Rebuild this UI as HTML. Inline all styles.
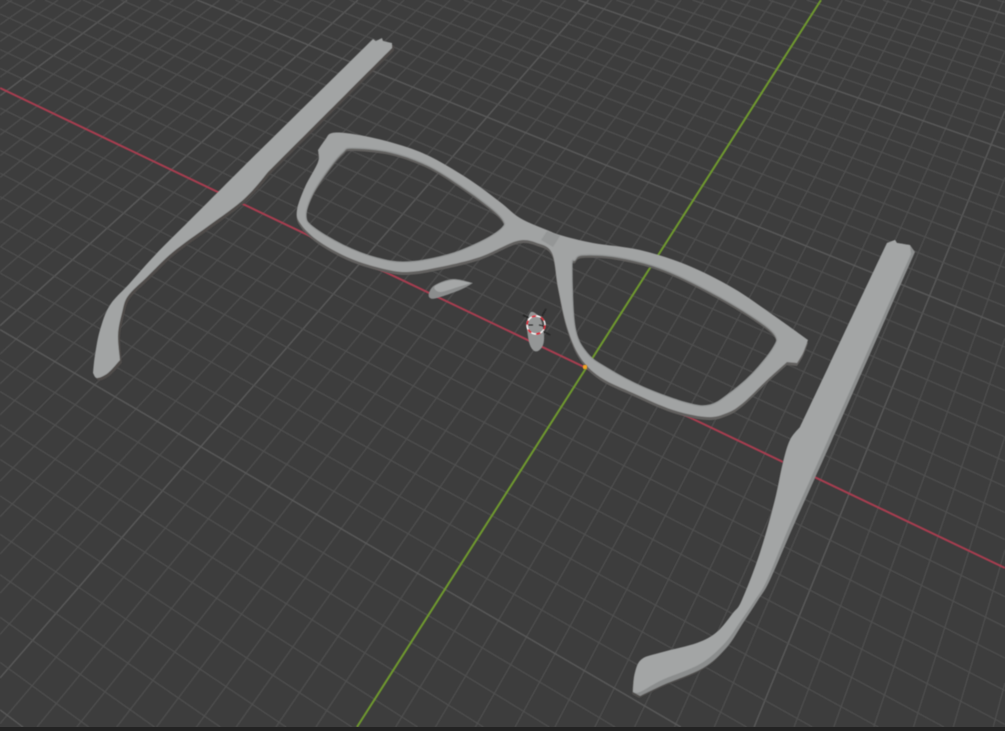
<!DOCTYPE html>
<html><head><meta charset="utf-8"><style>
html,body{margin:0;padding:0;background:#3d3d3d;width:1005px;height:731px;overflow:hidden}
svg{display:block;position:absolute;left:0;top:0;overflow:hidden}
</style></head><body>
<svg width="1005" height="731" viewBox="0 0 1005 731" xmlns="http://www.w3.org/2000/svg">
<defs>
<filter id="b" x="0" y="0" width="100%" height="100%" filterUnits="userSpaceOnUse"><feGaussianBlur stdDeviation="0.45"/></filter>
</defs>
<rect width="1005" height="731" fill="#3d3d3d"/>
<g id="grid" filter="url(#b)"></g>
<g filter="url(#b)">
<line x1="0" y1="88" x2="1005" y2="568" stroke="#a83c4f" stroke-width="2"/>
<line x1="821" y1="0" x2="357" y2="727" stroke="#6f9a2e" stroke-width="2"/>
</g>
<g id="obj" filter="url(#b)" stroke-linejoin="round"></g>
<g filter="url(#b)">
<g fill="none">
<circle cx="536" cy="325" r="9" stroke="#fff" stroke-width="1.4"/>
<circle cx="536" cy="325" r="9" stroke="#e02030" stroke-width="1.5" stroke-dasharray="4.7 4.7"/>
</g>
<g stroke="#1c1c1c" stroke-width="1">
<line x1="542" y1="316" x2="546" y2="309"/>
<line x1="529" y1="318" x2="523" y2="315"/>
<line x1="543" y1="331" x2="550" y2="335"/>
<line x1="528" y1="325" x2="533" y2="325"/>
<line x1="539" y1="325" x2="544" y2="326"/>
</g>
<rect x="583" y="365" width="4" height="4" rx="1" fill="#f5a223"/>
</g>
<rect x="0" y="727" width="1005" height="4" fill="#232323"/>
</svg>
<script>
(function(){
var V1=[1457,-1000],V2=[-2278,-1000],W=1005,H=727,out='';
function clip(a,b){
 var dx=b[0]-a[0],dy=b[1]-a[1],t0=-1e9,t1=1e9,p=[-dx,dx,-dy,dy],q=[a[0],W-a[0],a[1],H-a[1]];
 for(var n=0;n<4;n++){
  if(p[n]===0){if(q[n]<0)return null;continue;}
  var r=q[n]/p[n];
  if(p[n]<0){if(r>t0)t0=r;}else{if(r<t1)t1=r;}
 }
 if(t0>=t1)return null;
 return [a[0]+dx*t0,a[1]+dy*t0,a[0]+dx*t1,a[1]+dy*t1];
}
function ln(v,p,major){
 var c=clip(v,p); if(!c)return '';
 return '<line x1="'+c[0].toFixed(1)+'" y1="'+c[1].toFixed(1)+'" x2="'+c[2].toFixed(1)+'" y2="'+c[3].toFixed(1)+'" stroke="'+(major?'#5a5a5a':'#4f4f4f')+'" stroke-width="'+(major?1.4:1.2)+'"/>';
}
for(var i=-120;i<=120;i++){
 if(i===0)continue;
 var r=0.00034928-0.00000295*i; if(r<=0.00001)continue;
 var x=1/r-2278,y=88+0.4776*x;
 out+=ln(V1,[x,y],i%10===0);
}
for(var j=-60;j<=60;j++){
 if(j===0)continue;
 var q=0.0007315+0.0000102*j; if(q<=0.00001)continue;
 var yy=1/q-1000,xx=585+(367-yy)*0.638;
 out+=ln(V2,[xx,yy],j%10===0);
}
document.getElementById('grid').innerHTML=out;

/* smooth closed path; a trailing ! marks a sharp corner */
function cr(s){
 var n=s.trim().split(/\s+/).map(function(t){var c=t.slice(-1)==='!',a=t.replace('!','').split(',').map(Number);a.c=c;return a;});
 var L=n.length,d='M'+n[0][0]+' '+n[0][1];
 for(var k=0;k<L;k++){
  var p1=n[k],p2=n[(k+1)%L],p0=p1.c?p1:n[(k-1+L)%L],p3=p2.c?p2:n[(k+2)%L];
  d+='C'+(p1[0]+(p2[0]-p0[0])/6).toFixed(1)+' '+(p1[1]+(p2[1]-p0[1])/6).toFixed(1)+' '+(p2[0]-(p3[0]-p1[0])/6).toFixed(1)+' '+(p2[1]-(p3[1]-p1[1])/6).toFixed(1)+' '+p2[0]+' '+p2[1];
 }
 return d+'Z';
}
var LT='373,39! 376,41! 382,38! 383,41! 392,43! 392,48! 268,172! 253,190 237,205 207,227 173,252 147,277 128,296 122,313 118,335 120,360! 108,373 97,378 93,373! 95,355 100,330 110,305 130,283 157,253 190,220 240,170!';
var RT='887,243! 895,240! 897,243! 910,245! 915,252! 832,440 815,478 793,527 770,580 758,600 743,623 727,647 703,668 663,685 640,696! 633,692! 635,673 642,659 663,652 697,643 717,632 733,613 742,600 760,553 775,500 783,463 790,440 800,427!';
var RTtop='887,243! 895,240! 897,243! 910,245! 911,254! 828,440 811,478 789,527 767,580 755,600 740,622 724,644 700,664 662,680 640,692 633,692! 635,673 642,659 663,652 697,643 717,632 733,613 742,600 760,553 775,500 783,463 790,440 800,427!';
var OUT='332,133 353,134 390,142 427,155 467,178 500,202 520,218 547,230 560,235 593,243 640,250 687,265 733,288 773,315 808,340! 803,353 797,363! 787,362! 767,380 743,403 727,413 707,417 673,410 633,393 600,377 580,357 567,327 558,287 552,253 537,243 517,241 480,257 440,267 407,272 380,268 347,257 317,240 300,223 297,210 305,187 318,162 318,150! 325,140';
var H1='352,148 390,152 427,165 460,185 490,207 503,220 502,228 480,242 447,255 407,262 377,258 343,245 313,227 306,215 313,193 330,167 343,152';
var H2='583,255 617,257 660,268 707,290 753,317 775,335 773,348 753,373 730,393 710,405 687,403 643,387 607,368 587,353 575,327 572,267 575,260';
var F=cr(OUT)+cr(H1)+cr(H2);
function P(d,fill,extra){return '<path d="'+d+'" fill="'+fill+'" '+(extra||'')+'/>';}
var o='';
o+=P(cr(LT),'#4f4c49','transform="translate(2,2.5)"');
o+=P(cr(LT),'#a2a4a4');
o+=P(cr(RT),'#4f4d4c','transform="translate(-1,2)"');
o+=P(cr(RT),'#8b8d8d');
o+=P(cr(RTtop),'#a3a5a5');
o+=P(F,'#62605e','fill-rule="evenodd" transform="translate(0,3)"');
o+=P(F,'#a1a3a3','fill-rule="evenodd"');
o+='<path d="'+cr(H1)+'" fill="none" stroke="#929494" stroke-width="1.2"/>';
o+='<path d="'+cr(H2)+'" fill="none" stroke="#929494" stroke-width="1.2"/>';
o+='<path d="M547 231L560 236L553 247L541 240Z" fill="#949696"/>';
o+=P(cr('429,293 435,285 453,279 473,283! 460,290 437,298 430,298'),'#8b8d8d');
o+=P(cr('435,286 453,280 471,283! 458,287 440,292'),'#a5a7a7');
o+=P(cr('530,313 535,313 541,320 544,335 543,345 538,351 533,350 529,342 527,325'),'#949696');
document.getElementById('obj').innerHTML=o;
})();
</script>
</body></html>
